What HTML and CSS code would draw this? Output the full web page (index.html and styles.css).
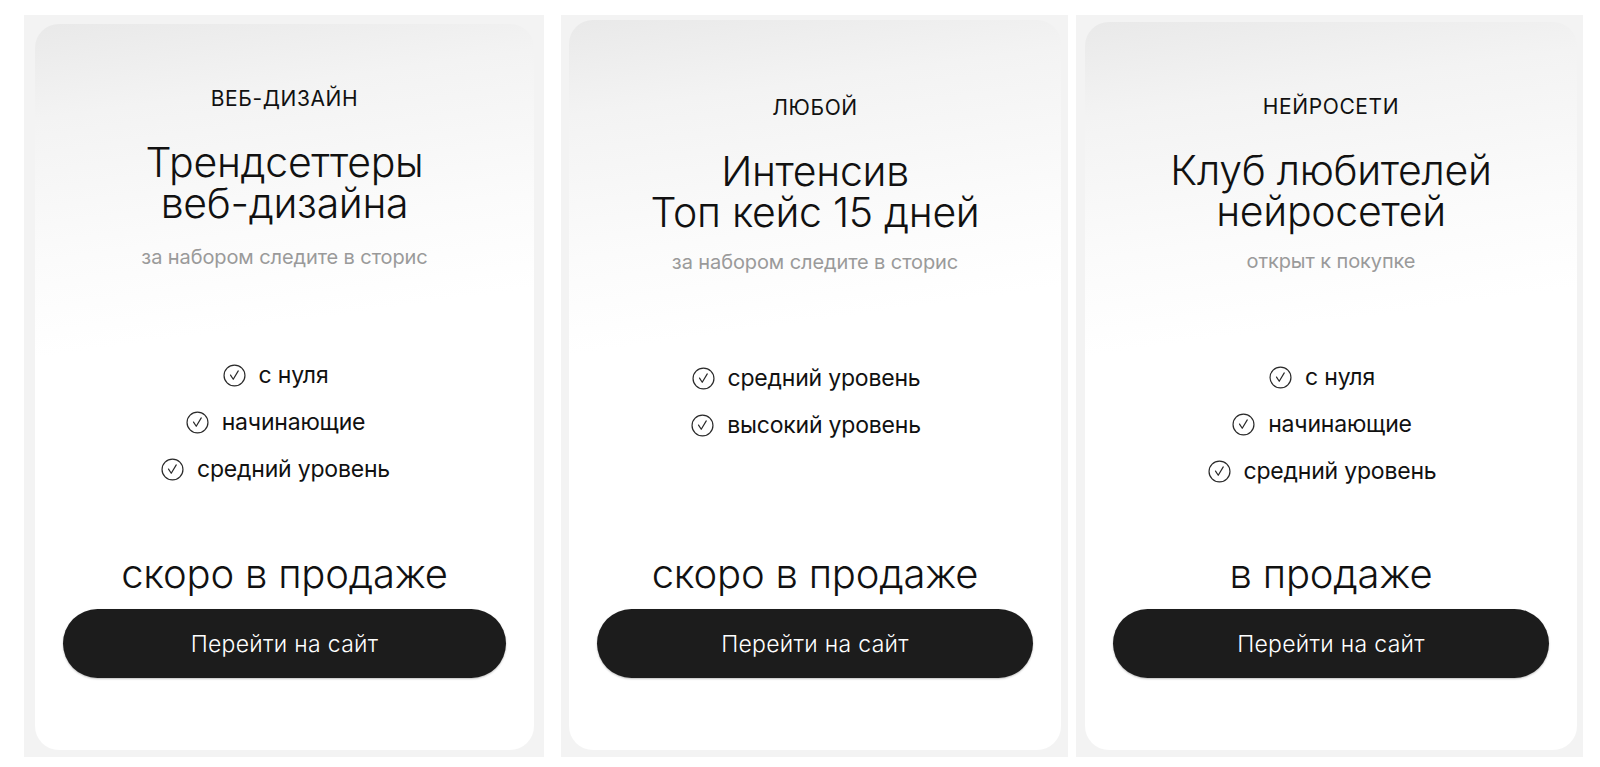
FILE: index.html
```html
<!DOCTYPE html>
<html lang="ru">
<head>
<meta charset="utf-8">
<title>Курсы</title>
<link rel="stylesheet" href="styles.css">
</head>
<body>
<div class="row">
  <section class="panel panel--first">
    <div class="card card--first">
      <div class="category">ВЕБ-ДИЗАЙН</div>
      <h2 class="title">Трендсеттеры<br>веб-дизайна</h2>
      <div class="subtitle">за набором следите в сторис</div>
      <ul class="features">
        <li class="feature"><svg class="check" viewBox="0 0 22 22"><circle cx="11" cy="11" r="10" /><path d="M7.2 10.6 L9.8 14.6 L14.6 6.6" /></svg><span>с нуля</span></li>
        <li class="feature"><svg class="check" viewBox="0 0 22 22"><circle cx="11" cy="11" r="10" /><path d="M7.2 10.6 L9.8 14.6 L14.6 6.6" /></svg><span>начинающие</span></li>
        <li class="feature"><svg class="check" viewBox="0 0 22 22"><circle cx="11" cy="11" r="10" /><path d="M7.2 10.6 L9.8 14.6 L14.6 6.6" /></svg><span>средний уровень</span></li>
      </ul>
      <div class="status">скоро в продаже</div>
      <a class="button" href="#">Перейти на сайт</a>
    </div>
  </section>
  <section class="panel panel--second">
    <div class="card card--tight">
      <div class="category">ЛЮБОЙ</div>
      <h2 class="title">Интенсив<br>Топ кейс 15 дней</h2>
      <div class="subtitle">за набором следите в сторис</div>
      <ul class="features">
        <li class="feature"><svg class="check" viewBox="0 0 22 22"><circle cx="11" cy="11" r="10" /><path d="M7.2 10.6 L9.8 14.6 L14.6 6.6" /></svg><span>средний уровень</span></li>
        <li class="feature"><svg class="check" viewBox="0 0 22 22"><circle cx="11" cy="11" r="10" /><path d="M7.2 10.6 L9.8 14.6 L14.6 6.6" /></svg><span>высокий уровень</span></li>
      </ul>
      <div class="status">скоро в продаже</div>
      <a class="button" href="#">Перейти на сайт</a>
    </div>
  </section>
  <section class="panel panel--third">
    <div class="card card--tight card--third">
      <div class="category">НЕЙРОСЕТИ</div>
      <h2 class="title">Клуб любителей<br>нейросетей</h2>
      <div class="subtitle">открыт к покупке</div>
      <ul class="features">
        <li class="feature"><svg class="check" viewBox="0 0 22 22"><circle cx="11" cy="11" r="10" /><path d="M7.2 10.6 L9.8 14.6 L14.6 6.6" /></svg><span>с нуля</span></li>
        <li class="feature"><svg class="check" viewBox="0 0 22 22"><circle cx="11" cy="11" r="10" /><path d="M7.2 10.6 L9.8 14.6 L14.6 6.6" /></svg><span>начинающие</span></li>
        <li class="feature"><svg class="check" viewBox="0 0 22 22"><circle cx="11" cy="11" r="10" /><path d="M7.2 10.6 L9.8 14.6 L14.6 6.6" /></svg><span>средний уровень</span></li>
      </ul>
      <div class="status">в продаже</div>
      <a class="button" href="#">Перейти на сайт</a>
    </div>
  </section>
</div>
</body>
</html>
```
FILE: styles.css
```css
* { box-sizing: border-box; }
html, body { margin: 0; padding: 0; background: #ffffff; }
body {
  font-family: Inter, "Noto Sans", "Liberation Sans", sans-serif;
  color: #111111;
  width: 1600px;
  height: 767px;
  overflow: hidden;
}
.row {
  display: flex;
  align-items: stretch;
  padding: 15px 0 0 24px;
  height: 757px;
}
.panel {
  background: #f3f3f3;
  display: flex;
  padding: 8px 7px 7px 8px;
}
.panel--first { width: 520px; padding: 9px 10px 7px 11px; }
.panel--second { width: 507px; margin-left: 17px; padding-top: 5px; }
.panel--third { width: 507px; margin-left: 8px; padding: 7px 6px 7px 9px; }

.card {
  flex: 1;
  border-radius: 24px;
  background: linear-gradient(172deg, #e9e9e9 0%, #f3f3f3 12%, #fbfbfb 30%, #ffffff 42%);
  display: flex;
  flex-direction: column;
  align-items: center;
  text-align: center;
  padding: 76px 28px 72px;
}
.card--first { padding-top: 63px; }
.card--third { padding-top: 73px; }

.category {
  font-size: 21px;
  line-height: 24px;
  font-weight: 400;
  letter-spacing: 0.6px;
}
.title {
  margin: 31px 0 0;
  font-size: 41px;
  line-height: 41px;
  font-weight: 300;
  letter-spacing: -0.3px;
}
.subtitle {
  margin-top: 21px;
  font-size: 20px;
  line-height: 24px;
  color: #9a9a9a;
  font-weight: 400;
  letter-spacing: -0.1px;
}
.card--tight .subtitle { margin-top: 17px; }
.features {
  list-style: none;
  margin: 92px 0 0;
  padding: 0 18px 0 0;
  display: flex;
  flex-direction: column;
  align-items: center;
  gap: 19px;
}
.card--tight .features { margin-top: 90px; }
.feature {
  display: flex;
  align-items: center;
  gap: 13px;
  font-size: 23px;
  line-height: 28px;
  font-weight: 400;
  letter-spacing: -0.2px;
}
.check {
  width: 23px;
  height: 23px;
  fill: none;
  stroke: #2a2a2a;
  stroke-width: 1.15;
  stroke-linecap: round;
  stroke-linejoin: round;
}
.status {
  margin-top: auto;
  font-size: 40px;
  line-height: 48px;
  font-weight: 300;
  letter-spacing: -0.2px;
}
.button {
  margin-top: 11px;
  width: 100%;
  height: 69px;
  border-radius: 35px;
  background: #1c1c1c;
  color: #ffffff;
  text-decoration: none;
  display: flex;
  align-items: center;
  justify-content: center;
  font-size: 23px;
  font-weight: 300;
  letter-spacing: 0.3px;
  box-shadow: 0 1px 2px rgba(0,0,0,0.25);
}
```
